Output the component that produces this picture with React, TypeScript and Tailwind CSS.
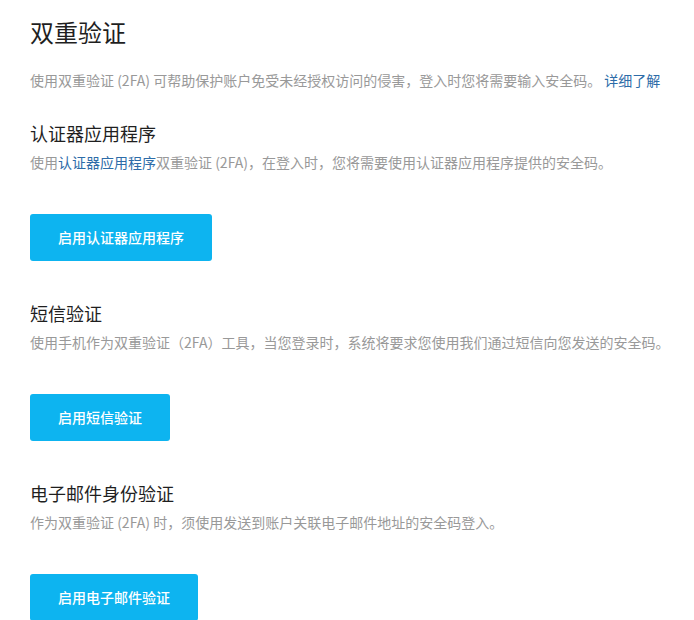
import React from 'react';

interface Method {
  title: string;
  desc: React.ReactNode;
  action: string;
}

const methods: Method[] = [
  {
    title: '认证器应用程序',
    desc: (
      <>
        使用<span className="text-[#2d6ca8]">认证器应用程序</span>双重验证 (2FA)，在登入时，您将需要使用认证器应用程序提供的安全码。
      </>
    ),
    action: '启用认证器应用程序',
  },
  {
    title: '短信验证',
    desc: '使用手机作为双重验证（2FA）工具，当您登录时，系统将要求您使用我们通过短信向您发送的安全码。',
    action: '启用短信验证',
  },
  {
    title: '电子邮件身份验证',
    desc: '作为双重验证 (2FA) 时，须使用发送到账户关联电子邮件地址的安全码登入。',
    action: '启用电子邮件验证',
  },
];

export default function App() {
  return (
    <div
      className="min-h-screen bg-white px-[30px] pt-4 pb-10"
      style={{ fontFamily: '"Noto Sans CJK SC", "Noto Sans", sans-serif' }}
    >
      <h1 className="text-[24px] leading-8 text-[#1f1f1f]">双重验证</h1>
      <p className="mt-[22px] text-[14px] leading-5 text-[#999] whitespace-nowrap">
        使用双重验证 (2FA) 可帮助保护账户免受未经授权访问的侵害，登入时您将需要输入安全码。{' '}
        <a href="#" className="text-[#2d6ca8]">详细了解</a>
      </p>

      {methods.map((m, i) => (
        <section key={m.title} className={i === 0 ? 'mt-[31px]' : 'mt-[40px]'}>
          <h2 className="text-[18px] leading-6 text-[#1f1f1f]">{m.title}</h2>
          <p className="mt-[7px] text-[14px] leading-5 text-[#999] whitespace-nowrap">{m.desc}</p>
          <button className="mt-[42px] h-[47px] px-7 rounded-[3px] bg-[#0db4f0] text-white text-[14px] font-medium">
            {m.action}
          </button>
        </section>
      ))}
    </div>
  );
}
